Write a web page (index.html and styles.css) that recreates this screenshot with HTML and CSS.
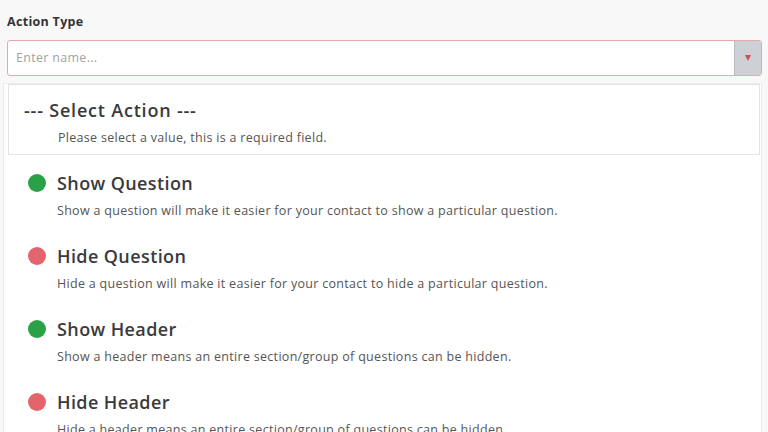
FILE: index.html
```html
<!DOCTYPE html>
<html lang="en">
<head>
<meta charset="utf-8">
<title>Action Type</title>
<link rel="stylesheet" href="styles.css">
</head>
<body>
<div class="field">
  <div class="label">Action Type</div>
  <div class="input">
    <div class="placeholder">Enter name...</div>
    <div class="toggle"><span class="caret"></span></div>
  </div>
</div>
<div class="panel">
  <div class="select-box">
    <div class="select-title">--- Select Action ---</div>
    <div class="select-desc">Please select a value, this is a required field.</div>
  </div>
  <div class="list">
    <div class="row">
      <div class="head"><span class="dot green"></span><span class="title">Show Question</span></div>
      <div class="desc">Show a question will make it easier for your contact to show a particular question.</div>
    </div>
    <div class="row">
      <div class="head"><span class="dot red"></span><span class="title">Hide Question</span></div>
      <div class="desc">Hide a question will make it easier for your contact to hide a particular question.</div>
    </div>
    <div class="row">
      <div class="head"><span class="dot green"></span><span class="title">Show Header</span></div>
      <div class="desc">Show a header means an entire section/group of questions can be hidden.</div>
    </div>
    <div class="row">
      <div class="head"><span class="dot red"></span><span class="title">Hide Header</span></div>
      <div class="desc">Hide a header means an entire section/group of questions can be hidden.</div>
    </div>
  </div>
</div>
</body>
</html>
```
FILE: styles.css
```css
* { box-sizing: border-box; }
html, body { margin: 0; padding: 0; }
body {
  background: #f8f8f9;
  font-family: "Open Sans", Lato, sans-serif;
  color: #333;
  height: 432px;
  overflow: hidden;
}
.field { padding: 14px 6px 0 7px; }
.label {
  font-size: 12.5px;
  font-weight: 700;
  line-height: 16px;
  letter-spacing: 0.3px;
  color: #333;
  margin-bottom: 10px;
}
.input {
  display: flex;
  height: 36px;
  background: #fff;
  border: 1px solid #e4a9ab;
  border-radius: 3px;
  overflow: hidden;
}
.placeholder {
  flex: 1;
  padding-left: 8px;
  font-size: 12.5px;
  letter-spacing: 0.3px;
  line-height: 34px;
  color: #a3a3a3;
}
.toggle {
  width: 27px;
  background: #cdd1d6;
  border-left: 1px solid #b9bdc3;
  display: flex;
  align-items: center;
  justify-content: center;
}
.caret {
  width: 0; height: 0;
  border-left: 3.5px solid transparent;
  border-right: 3.5px solid transparent;
  border-top: 6px solid #e0464f;
  margin-top: -1px;
}
.panel {
  margin: 7px 6px 0 3px;
  background: #fff;
  border-left: 1px solid #e9e9eb;
  border-right: 1px solid #e9e9eb;
  border-top: 1px solid #eeeeef;
  height: 360px;
}
.select-box {
  margin: 0 1px 0 4px;
  border: 1px solid #e3e3e5;
  padding: 13px 0 8px 15px;
}
.select-title {
  font-size: 18px;
  font-weight: 600;
  line-height: 24px;
  letter-spacing: 0.8px;
  color: #3a3a3c;
}
.select-desc {
  margin-top: 8px;
  padding-left: 34px;
  font-size: 12.5px;
  letter-spacing: 0.3px;
  line-height: 16px;
  color: #555;
}
.list { padding-top: 4px; }
.row { padding: 12px 0 13px 24px; }
.head { display: flex; align-items: center; height: 24px; }
.dot {
  width: 18px; height: 18px;
  border-radius: 50%;
  margin-right: 11px;
  flex: none;
}
.green { background: #2aa146; }
.red { background: #e3646b; }
.title {
  font-size: 18px;
  font-weight: 600;
  letter-spacing: 0.4px;
  color: #3a3a3c;
}
.desc {
  margin-top: 8px;
  padding-left: 29px;
  font-size: 12.5px;
  letter-spacing: 0.3px;
  line-height: 16px;
  color: #555;
  white-space: nowrap;
}
```
